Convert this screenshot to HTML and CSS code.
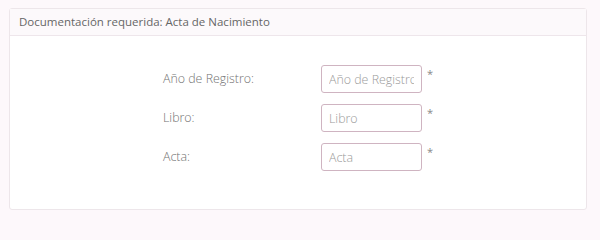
FILE: index.html
```html
<!DOCTYPE html>
<html lang="es">
<head>
<meta charset="utf-8">
<link rel="stylesheet" href="styles.css">
</head>
<body>
<div class="panel">
  <div class="panel-head">Documentación requerida: Acta de Nacimiento</div>
  <div class="panel-body">
    <div class="row">
      <label class="lbl">Año de Registro:</label>
      <input class="field" type="text" placeholder="Año de Registro">
      <span class="req">*</span>
    </div>
    <div class="row">
      <label class="lbl">Libro:</label>
      <input class="field" type="text" placeholder="Libro">
      <span class="req">*</span>
    </div>
    <div class="row">
      <label class="lbl">Acta:</label>
      <input class="field" type="text" placeholder="Acta">
      <span class="req">*</span>
    </div>
  </div>
</div>
</body>
</html>
```
FILE: styles.css
```css
html, body {
  margin: 0;
  padding: 0;
  background: #fdf8fb;
  font-family: "Open Sans", "Liberation Sans", sans-serif;
}
body {
  padding: 8px 13px 0 9px;
  height: 228px;
  box-sizing: border-box;
  overflow: hidden;
}
.panel {
  background: #ffffff;
  border: 1px solid #ede6ea;
  border-radius: 3px;
  height: 202px;
  box-sizing: border-box;
}
.panel-head {
  background: #fcf9fb;
  border-bottom: 1px solid #eee6eb;
  height: 27px;
  box-sizing: border-box;
  padding: 0 9px;
  font-size: 11.5px;
  line-height: 26px;
  color: #666;
}
.panel-body {
  padding: 29px 0 0 153px;
  display: flex;
  flex-direction: column;
  gap: 11px;
}
.row {
  display: flex;
  align-items: flex-start;
  height: 28px;
}
.lbl {
  width: 158px;
  font-size: 12.4px;
  font-weight: 300;
  color: #737373;
  line-height: 28px;
}
.field {
  width: 101px;
  height: 28px;
  box-sizing: border-box;
  border: 1px solid #cfb4c1;
  border-radius: 3px;
  padding: 0 7px;
  font-family: "Open Sans", "Liberation Sans", sans-serif;
  font-size: 12.4px;
  font-weight: 300;
  color: #666;
  background: #fff;
  outline: none;
}
.field::placeholder {
  color: #9a9a9a;
}
.req {
  margin-left: 5px;
  margin-top: 2px;
  font-size: 11px;
  color: #888;
  line-height: 14px;
}
```
